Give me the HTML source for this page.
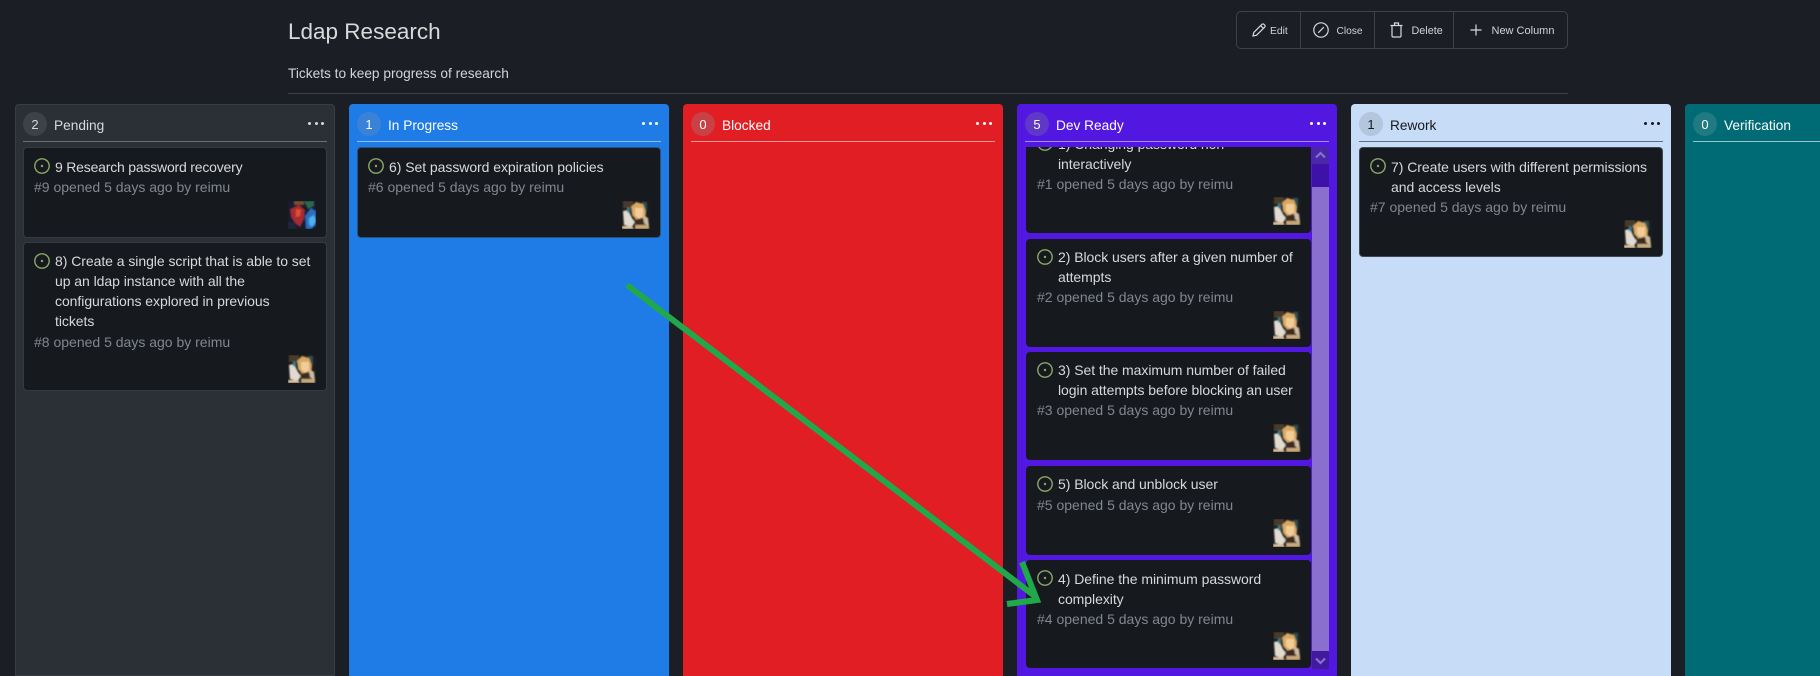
<!DOCTYPE html>
<html lang="en"><head><meta charset="utf-8"><title>Ldap Research</title>
<style>
*{box-sizing:border-box}
html,body{margin:0;padding:0;width:1820px;height:676px;overflow:hidden;background:#1b1e24;font-family:"Liberation Sans",sans-serif;color:#d9dadb}
.abs{position:absolute}
h1{position:absolute;left:288px;top:17px;margin:0;font-size:22.5px;line-height:30px;font-weight:400;color:#d7d9db}
.sub{position:absolute;left:288px;top:64px;font-size:13.7px;line-height:20px;color:#d2d4d6}
.hr{position:absolute;left:288px;top:93px;width:1280px;height:1px;background:#3e4248}
.bar{position:absolute;left:1236px;top:11px;width:332px;height:38px;border:1px solid #3e4248;border-radius:5px}
.bar i{position:absolute;top:0;width:1px;height:36px;background:#3e4248}
.bar span{position:absolute;top:11px;line-height:16px;color:#d2d4d6}
.bar svg{position:absolute;fill:none;stroke:#d7d9db;stroke-width:1.2}
.col{position:absolute;top:104px;width:320px;height:572px;border-radius:4px 4px 0 0;overflow:hidden}
.col .n{position:absolute;left:8px;top:8px;width:24px;height:24px;border-radius:50%;font-size:13px;line-height:25px;text-align:center}
.col .t{position:absolute;left:39px;top:12px;font-size:13.7px;line-height:20px}
.col .ln{position:absolute;left:8px;right:8px;top:37px;height:1px}
.col .dots{position:absolute;left:293px;top:18px;width:16px;height:4px}
.col .dots b{position:absolute;top:0;width:3px;height:3px;border-radius:50%;background:currentColor}
.col .dots b:nth-child(1){left:0}.col .dots b:nth-child(2){left:6.5px}.col .dots b:nth-child(3){left:13px}
.card{position:absolute;background:#16191e;border:1px solid #363a40;border-radius:4px;color:#d7d9db;overflow:hidden}
.card .ic{position:absolute;left:10px;top:10px;width:16px;height:16px}
.card .ti{position:absolute;left:31px;top:9px;width:268px;font-size:14px;line-height:20px;letter-spacing:-.05px;white-space:nowrap}
.card .me{font-size:14px;line-height:20px;color:#82878e;position:absolute;left:10px;white-space:nowrap}
.card .av{position:absolute;width:28px;height:28px}
.ar{position:absolute;left:0;top:0;pointer-events:none}
.sb{position:absolute;width:17px}
.dev{border-color:#16191e}
</style></head><body>
<svg width="0" height="0" style="position:absolute"><defs>
<filter id="b" x="-10%" y="-10%" width="120%" height="120%"><feGaussianBlur stdDeviation=".9"/></filter>
<clipPath id="c"><rect width="28" height="28"/></clipPath>
<symbol id="ico" viewBox="0 0 16 16"><circle cx="8" cy="8" r="7.2" fill="none" stroke="#8aa868" stroke-width="1.4"/><circle cx="8" cy="8" r="1.2" fill="#8aa868"/></symbol>
<symbol id="girl" viewBox="0 0 28 28"><g clip-path="url(#c)"><rect width="28" height="28" fill="#1c1c1e"/><g filter="url(#b)">
<path d="M1 0h10v7H1z" fill="#4a3a2a"/><path d="M20 1h5v9h-4z" fill="#2a4f55"/>
<path d="M9 6l5-5 7 2 3 8-1 8-7 2-6-7z" fill="#d8a860"/><path d="M13 7h8v8l-4 3-4-4z" fill="#f2cc98"/>
<path d="M1 10l5-1 4 8 3 4-3 5-8-2z" fill="#e0dad0"/><path d="M5 6l3 1v5l-3-1z" fill="#2f7f90"/>
<path d="M12 19l8-2 5 3 1 4H13z" fill="#3a2c20"/><path d="M21 14l5 3 1 9-5-4z" fill="#cdbba2"/>
<path d="M0 25h10l2 3H0z" fill="#dcc09a"/><path d="M13 24h14v4H13z" fill="#c8a878"/></g></g></symbol>
<symbol id="hero" viewBox="0 0 28 28"><g clip-path="url(#c)"><rect width="28" height="28" fill="#171c30"/><g filter="url(#b)">
<path d="M6 0h10v4H6z" fill="#7a5030"/><path d="M16 0h10v5l-6 3z" fill="#2c6a48"/>
<path d="M2 8l9-4 6 5-1 9-4 8-5-4-4-6z" fill="#a82a30"/><path d="M8 8l5 1-1 6-4 1z" fill="#e05030"/>
<path d="M17 15l6-8 5 3v14l-5 4h-5z" fill="#2a70c0"/><path d="M21 17l5-3 2 6-4 6-3-3z" fill="#50b0ee"/>
<path d="M0 20l6 2 3 6H0z" fill="#20263a"/></g></g></symbol>
</defs></svg>

<h1>Ldap Research</h1>
<div class="sub">Tickets to keep progress of research</div>
<div class="hr"></div>

<div class="bar">
<i style="left:63px"></i><i style="left:137px"></i><i style="left:216px"></i>
<svg style="left:14px;top:10px" width="16" height="16" viewBox="0 0 16 16"><path d="M2 14l.8-3.6L10.8 2.4a1.5 1.5 0 0 1 2.2 0l.6.6a1.5 1.5 0 0 1 0 2.2L5.6 13.2z"/><path d="M9.6 3.6l2.8 2.8"/></svg>
<span style="left:33px;top:12px;font-size:10.3px">Edit</span>
<svg style="left:76px;top:10px" width="16" height="16" viewBox="0 0 16 16"><circle cx="8" cy="8" r="7.2"/><path d="M5.2 10.8l5.6-5.6"/></svg>
<span style="left:99.5px;top:12px;font-size:10.2px">Close</span>
<svg style="left:153px;top:10px" width="13" height="16" viewBox="0 0 13 16"><path d="M.5 3.5h12M4.5 3.3V1h4v2.3M2 3.6v10.2c0 .7.5 1.2 1.2 1.2h6.6c.7 0 1.2-.5 1.2-1.2V3.6"/></svg>
<span style="left:174.5px;font-size:10.8px">Delete</span>
<svg style="left:233px;top:12px;stroke-width:1.3" width="12" height="12" viewBox="0 0 13 13"><path d="M6.5 0.5v12M.5 6.5h12"/></svg>
<span style="left:254.5px;font-size:11px">New Column</span>
</div>

<!-- Pending -->
<div class="col" style="left:15px;background:#2b2f36;box-shadow:inset 0 0 0 1px #3a3e44;color:#d7d9db">
<div class="n" style="background:#3d4148">2</div><div class="t">Pending</div><div class="ln" style="background:#6a6e74"></div><div class="dots"><b></b><b></b><b></b></div>
<div class="card" style="left:8px;top:43px;width:304px;height:91px"><svg class="ic"><use href="#ico"/></svg><div class="ti" style="letter-spacing:-.2px">9 Research password recovery</div><div class="me" style="top:29px">#9 opened 5 days ago by reimu</div><svg class="av" style="left:264px;top:53px"><use href="#hero"/></svg></div>
<div class="card" style="left:8px;top:138px;width:304px;height:149px"><svg class="ic"><use href="#ico"/></svg><div class="ti" style="top:8px">8) Create a single script that is able to set<br>up an ldap instance with all the<br>configurations explored in previous<br>tickets</div><div class="me" style="top:89px">#8 opened 5 days ago by reimu</div><svg class="av" style="left:264px;top:112px"><use href="#girl"/></svg></div>
</div>

<!-- In Progress -->
<div class="col" style="left:349px;background:#1f7be6;color:#fff">
<div class="n" style="background:#3a82d8">1</div><div class="t">In Progress</div><div class="ln" style="background:#8fbdf2"></div><div class="dots"><b></b><b></b><b></b></div>
<div class="card" style="left:8px;top:43px;width:304px;height:91px;border-color:#28527f"><svg class="ic"><use href="#ico"/></svg><div class="ti">6) Set password expiration policies</div><div class="me" style="top:29px">#6 opened 5 days ago by reimu</div><svg class="av" style="left:264px;top:53px"><use href="#girl"/></svg></div>
</div>

<!-- Blocked -->
<div class="col" style="left:683px;background:#e01e23;color:#fff">
<div class="n" style="background:#c94045">0</div><div class="t">Blocked</div><div class="ln" style="background:#f09a9c"></div><div class="dots"><b></b><b></b><b></b></div>
</div>

<!-- Dev Ready -->
<div class="col" style="left:1017px;background:#5218e2;color:#fff">
<div class="n" style="background:#5f38c8">5</div><div class="t">Dev Ready</div><div class="ln" style="background:#a78bf0"></div><div class="dots"><b></b><b></b><b></b></div>
<div class="abs" style="left:9px;top:43px;width:304px;height:522px;overflow:hidden">
<div class="card dev" style="left:0;top:-23px;width:285px;height:109px"><svg class="ic"><use href="#ico"/></svg><div class="ti">1) Changing password non<br>interactively</div><div class="me" style="top:49px">#1 opened 5 days ago by reimu</div><svg class="av" style="left:246px;top:72px"><use href="#girl"/></svg></div>
<div class="card dev" style="left:0;top:92px;width:285px;height:108px"><svg class="ic" style="top:9px"><use href="#ico"/></svg><div class="ti" style="top:7px">2) Block users after a given number of<br>attempts</div><div class="me" style="top:47px">#2 opened 5 days ago by reimu</div><svg class="av" style="left:246px;top:71px"><use href="#girl"/></svg></div>
<div class="card dev" style="left:0;top:205px;width:285px;height:108px"><svg class="ic" style="top:9px"><use href="#ico"/></svg><div class="ti" style="top:7px">3) Set the maximum number of failed<br>login attempts before blocking an user</div><div class="me" style="top:47px">#3 opened 5 days ago by reimu</div><svg class="av" style="left:246px;top:71px"><use href="#girl"/></svg></div>
<div class="card dev" style="left:0;top:319px;width:285px;height:89px"><svg class="ic" style="top:9px"><use href="#ico"/></svg><div class="ti" style="top:7px">5) Block and unblock user</div><div class="me" style="top:28px">#5 opened 5 days ago by reimu</div><svg class="av" style="left:246px;top:52px"><use href="#girl"/></svg></div>
<div class="card dev" style="left:0;top:413px;width:285px;height:108px"><svg class="ic" style="top:9px"><use href="#ico"/></svg><div class="ti" style="top:8px">4) Define the minimum password<br>complexity</div><div class="me" style="top:48px">#4 opened 5 days ago by reimu</div><svg class="av" style="left:246px;top:71px"><use href="#girl"/></svg></div>
</div>
<div class="sb" style="left:295px;top:43px;height:17px;background:#4a26a8"></div>
<div class="sb" style="left:295px;top:60px;height:23px;background:#3e12a8"></div>
<div class="sb" style="left:295px;top:83px;height:464px;background:#8b6fcf"></div>
<div class="sb" style="left:295px;top:547px;height:18px;background:#421a9f"></div>
<svg class="abs" style="left:295px;top:43px" width="17" height="17" viewBox="0 0 17 17"><path d="M4 10.5l4.5-4.5 4.5 4.5" fill="none" stroke="#8b6fcf" stroke-width="2.2"/></svg>
<svg class="abs" style="left:295px;top:548px" width="17" height="17" viewBox="0 0 17 17"><path d="M4 6.5l4.5 4.5 4.5-4.5" fill="none" stroke="#8b6fcf" stroke-width="2.2"/></svg>
</div>

<!-- Rework -->
<div class="col" style="left:1351px;background:#c6dcf7;color:#16191e">
<div class="n" style="background:#b2c6dd">1</div><div class="t">Rework</div><div class="ln" style="background:#5f6e82"></div><div class="dots"><b></b><b></b><b></b></div>
<div class="card" style="left:8px;top:43px;width:304px;height:110px;border-color:#3f4853"><svg class="ic"><use href="#ico"/></svg><div class="ti">7) Create users with different permissions<br>and access levels</div><div class="me" style="top:49px">#7 opened 5 days ago by reimu</div><svg class="av" style="left:264px;top:72px"><use href="#girl"/></svg></div>
</div>

<!-- Verification -->
<div class="col" style="left:1685px;width:140px;background:#006b75;color:#fff">
<div class="n" style="background:#1f7a82">0</div><div class="t">Verification</div><div class="ln" style="right:0;background:#99c4c8"></div>
</div>

<svg class="ar" width="1820" height="676" viewBox="0 0 1820 676"><g fill="none" stroke="#21a84b" stroke-width="6" stroke-linecap="butt" stroke-linejoin="miter"><path d="M627 285L1036 597"/><path d="M1022 562L1037 600L1007 604"/></g></svg>
</body></html>
